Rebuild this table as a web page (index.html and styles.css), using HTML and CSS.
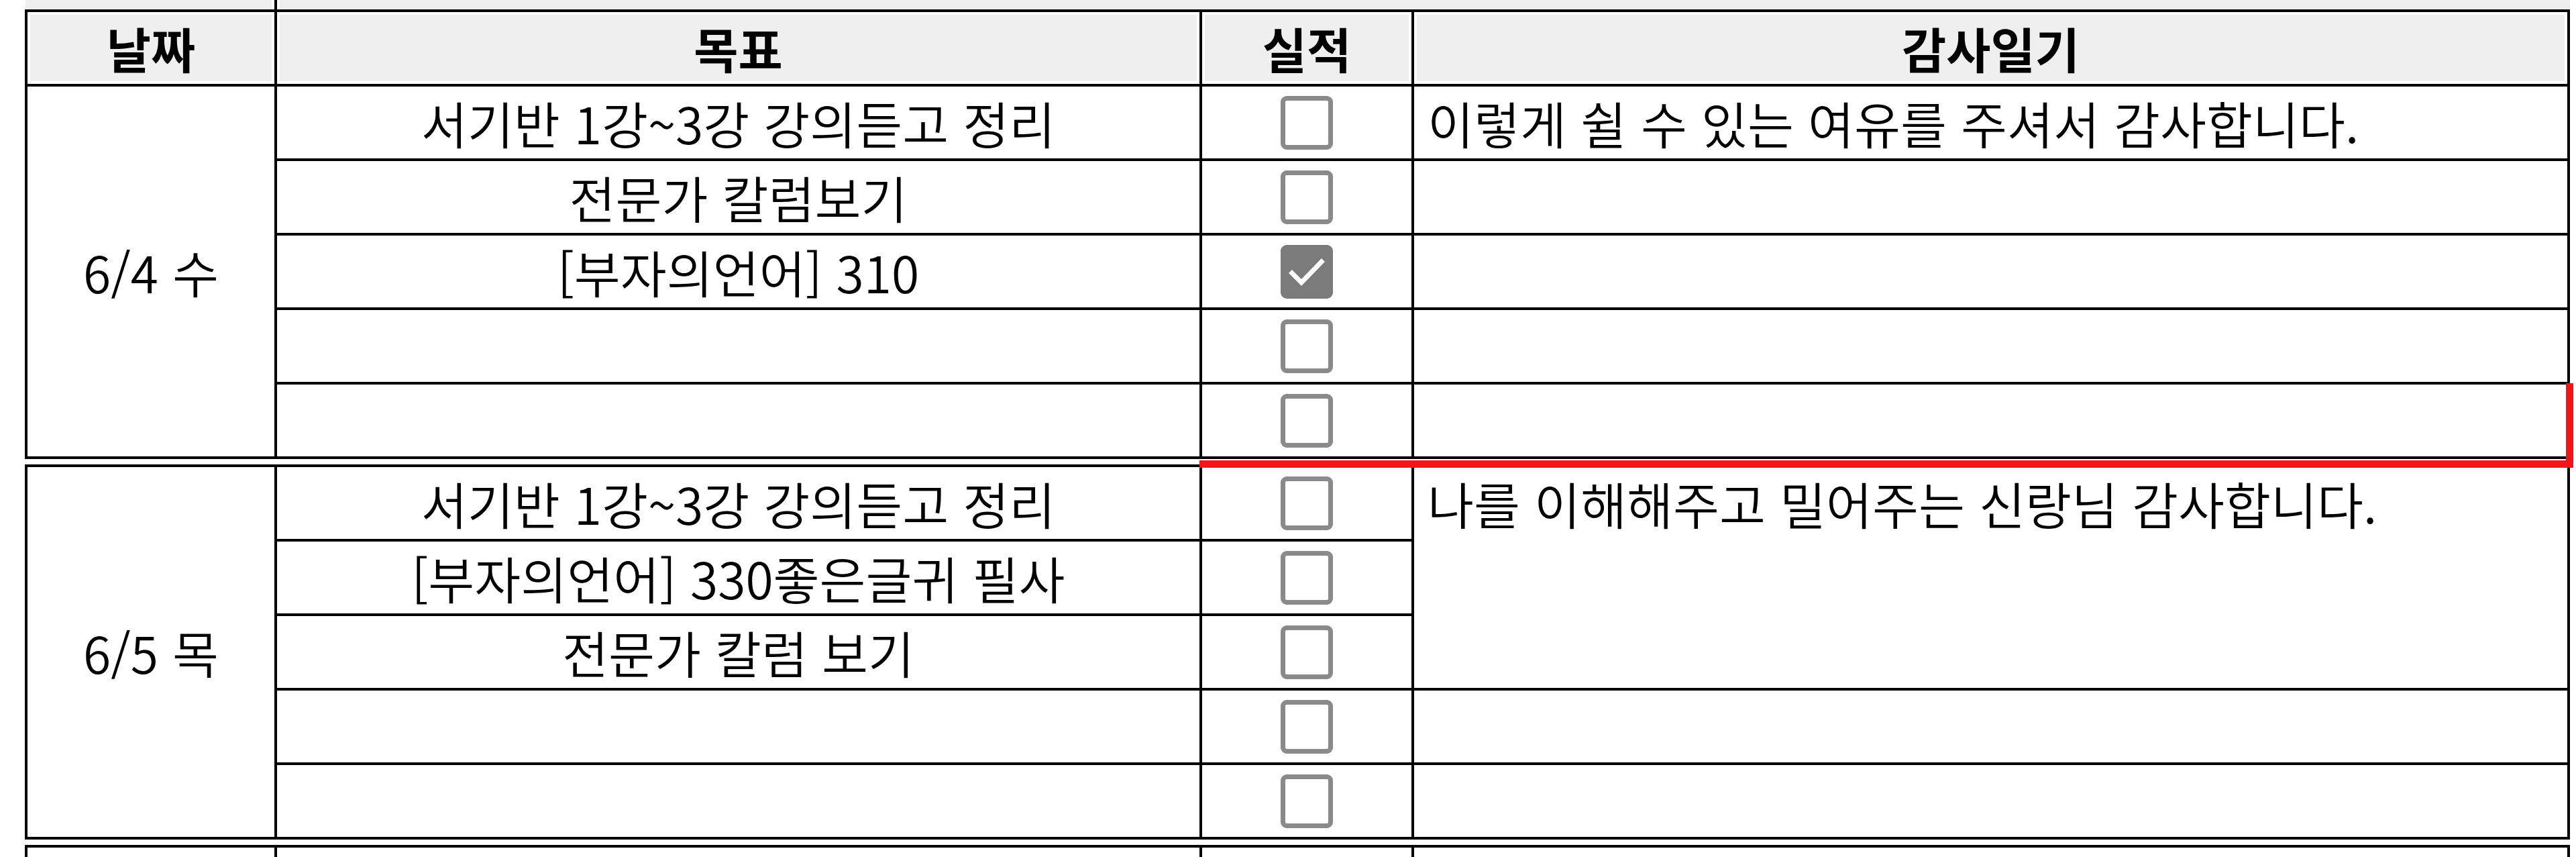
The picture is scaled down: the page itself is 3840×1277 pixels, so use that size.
FILE: index.html
```html
<!DOCTYPE html>
<html lang="ko">
<head>
<meta charset="utf-8">
<title>감사일기</title>
<link rel="stylesheet" href="styles.css">
</head>
<body>
<div class="page">
  <div class="strip"><div class="strip-a"></div><div class="strip-div"></div><div class="strip-b"></div></div>

  <div class="group">
    <div class="cell head c1">날짜</div>
    <div class="cell head c2">목표</div>
    <div class="cell head c3">실적</div>
    <div class="cell head c4">감사일기</div>

    <div class="cell date">6/4 수</div>
    <div class="cell goal">서기반 1강~3강 강의듣고 정리</div>
    <div class="cell check"><span class="cb"></span></div>
    <div class="cell diary">이렇게 쉴 수 있는 여유를 주셔서 감사합니다.</div>

    <div class="cell goal">전문가 칼럼보기</div>
    <div class="cell check"><span class="cb"></span></div>
    <div class="cell diary"></div>

    <div class="cell goal">[부자의언어] 310</div>
    <div class="cell check"><span class="cb checked"><svg viewBox="0 0 78 80" class="tick"><polyline points="17,42 31,56 61,25"/></svg></span></div>
    <div class="cell diary"></div>

    <div class="cell goal"></div>
    <div class="cell check"><span class="cb"></span></div>
    <div class="cell diary"></div>

    <div class="cell goal"></div>
    <div class="cell check"><span class="cb"></span></div>
    <div class="cell diary"></div>
  </div>

  <div class="group next">
    <div class="cell date">6/5 목</div>
    <div class="cell goal">서기반 1강~3강 강의듣고 정리</div>
    <div class="cell check"><span class="cb"></span></div>
    <div class="cell diary merged"><div class="line">나를 이해해주고 밀어주는 신랑님 감사합니다.</div></div>

    <div class="cell goal">[부자의언어] 330좋은글귀 필사</div>
    <div class="cell check"><span class="cb"></span></div>

    <div class="cell goal">전문가 칼럼 보기</div>
    <div class="cell check"><span class="cb"></span></div>

    <div class="cell goal"></div>
    <div class="cell check"><span class="cb"></span></div>
    <div class="cell diary"></div>

    <div class="cell goal"></div>
    <div class="cell check"><span class="cb"></span></div>
    <div class="cell diary"></div>
  </div>

  <div class="group next">
    <div class="cell date"></div>
    <div class="cell goal"></div>
    <div class="cell check"><span class="cb"></span></div>
    <div class="cell diary"></div>
  </div>

  <div class="selection"></div>
</div>
</body>
</html>
```

FILE: styles.css
```css
html, body {
  margin: 0;
  padding: 0;
  background: #ffffff;
}

body {
  width: 3840px;
  height: 1277px;
  overflow: hidden;
  font-family: "Noto Sans CJK KR", "Noto Sans", sans-serif;
  color: #000;
}

.page {
  position: relative;
  padding-left: 37px;
  width: 3803px;
  height: 1277px;
  overflow: hidden;
}

.strip {
  display: grid;
  grid-template-columns: 371px 4px 3418px;
  height: 10px;
  margin-left: 1px;
  margin-bottom: 4px;
}

.strip-a,
.strip-b {
  background: #efefef;
}

.strip-a {
  box-shadow: inset -4px 0 0 #fff;
}

.strip-b {
  box-shadow: inset 4px 0 0 #fff;
}

.strip-div {
  background: #000;
  height: 14px;
}

.group {
  display: grid;
  grid-template-columns: 372px 1379px 316px 1723px;
  grid-auto-rows: 111px;
  width: 3794px;
  box-sizing: border-box;
  border-top: 4px solid #000;
  border-left: 4px solid #000;
}

.group.next {
  margin-top: 8px;
}

.cell {
  box-sizing: border-box;
  border-right: 4px solid #000;
  border-bottom: 4px solid #000;
  display: flex;
  align-items: center;
  font-size: 75px;
  font-weight: 350;
  line-height: 1.2;
  white-space: nowrap;
}

.head {
  background: #efefef;
  box-shadow: inset 0 0 0 4px #fff;
  justify-content: center;
  font-weight: 700;
  font-size: 72px;
}

.date {
  grid-column: 1;
  grid-row: span 5;
  justify-content: center;
}

.goal {
  grid-column: 2;
  justify-content: center;
}

.check {
  grid-column: 3;
  justify-content: center;
}

.diary {
  grid-column: 4;
  padding-left: 20px;
}

.diary.merged {
  grid-row: span 3;
  display: block;
}

.line {
  height: 107px;
  display: flex;
  align-items: center;
}

.cb {
  display: block;
  width: 78px;
  height: 80px;
  box-sizing: border-box;
  border: 7px solid #8a8a8a;
  border-radius: 9px;
  background: #fff;
  position: relative;
}

.cb.checked {
  background: #7b7b7b;
  border-color: #7b7b7b;
}

.tick {
  position: absolute;
  left: -7px;
  top: -7px;
  width: 78px;
  height: 80px;
}

.tick polyline {
  fill: none;
  stroke: #fff;
  stroke-width: 7;
  stroke-linecap: square;
  stroke-linejoin: miter;
}

.selection {
  position: absolute;
  left: 1788px;
  top: 571px;
  width: 2048px;
  height: 126px;
  box-sizing: border-box;
  border-right: 11px solid #f31418;
  border-bottom: 11px solid #f31418;
  pointer-events: none;
}
```
